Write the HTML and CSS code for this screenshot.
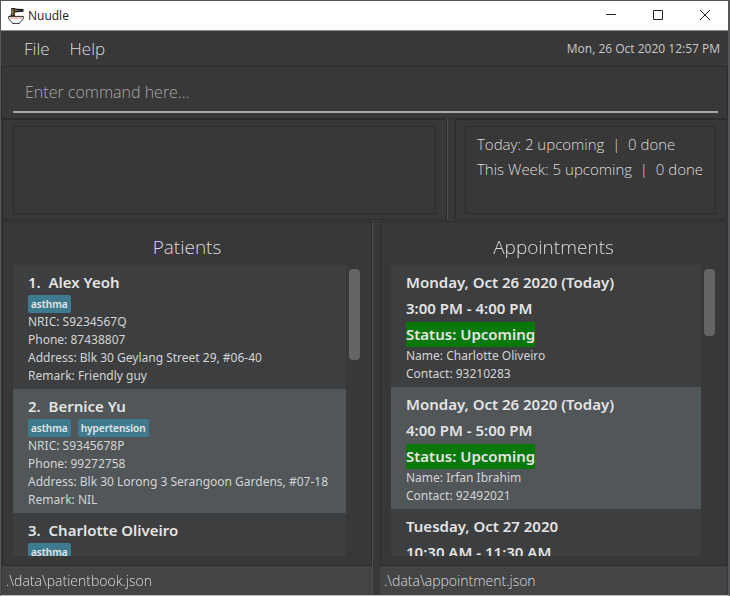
FILE: index.html
```html
<!DOCTYPE html>
<html lang="en">
<head>
<meta charset="utf-8">
<title>Nuudle</title>
<link rel="stylesheet" href="styles.css">
</head>
<body>
<div class="window">
  <header class="titlebar">
    <svg class="logo" viewBox="0 0 16 16" aria-hidden="true">
      <path d="M5 1.300 15.500 1.700M5 3.600 15.500 3" stroke="#1c1714" stroke-width="1.600" fill="none"/>
      <path d="M3.200 0h3.800v8H2.600V6.200h.8z" fill="#1c1714"/>
      <path d="M4.500 1v6.500M5.900 1v6" stroke="#e0b050" stroke-width=".6"/>
      <path d="M.6 8.400h14.800c0 2.900-1.300 4.500-3.100 5.500l-.9 1.500H4.600l-.9-1.500C1.900 12.900.6 11.300.6 8.400z" fill="#fff" stroke="#2c2c2c" stroke-width="1"/>
      <path d="M1.800 10h12.400" stroke="#f09a9e" stroke-width="1.200"/>
    </svg>
    <h1 class="app-name">Nuudle</h1>
    <button class="win-button" aria-label="Minimize"><svg viewBox="0 0 10 10"><path d="M0 4.500h10"/></svg></button>
    <button class="win-button" aria-label="Maximize"><svg viewBox="0 0 10 10"><path d="M.5.5h9v9h-9z"/></svg></button>
    <button class="win-button" aria-label="Close"><svg viewBox="0 0 10 10"><path d="M0 0l10 10M10 0L0 10"/></svg></button>
  </header>

  <nav class="menubar">
    <button class="menu">File</button>
    <button class="menu">Help</button>
    <time class="clock" datetime="2020-10-26T12:57">Mon, 26 Oct 2020 12:57 PM</time>
  </nav>

  <form class="command">
    <input class="command-input" type="text" aria-label="Command" placeholder="Enter command here...">
  </form>

  <div class="split summary">
    <section class="pane result-pane"><output class="box"></output></section>
    <div class="divider"></div>
    <section class="pane stats-pane">
      <div class="box stats">
        <p>Today: 2 upcoming &nbsp;|&nbsp; 0 done</p>
        <p>This Week: 5 upcoming &nbsp;|&nbsp; 0 done</p>
      </div>
    </section>
  </div>

  <main class="split lists">
    <section class="column patients">
      <div class="pane list-pane">
        <h2>Patients</h2>
        <div class="scroller">
          <ol class="list">
            <li class="card">
              <h3>1.&nbsp; Alex Yeoh</h3>
              <div class="tags"><span class="tag">asthma</span></div>
              <p>NRIC: S9234567Q</p>
              <p>Phone: 87438807</p>
              <p>Address: Blk 30 Geylang Street 29, #06-40</p>
              <p>Remark: Friendly guy</p>
            </li>
            <li class="card">
              <h3>2.&nbsp; Bernice Yu</h3>
              <div class="tags"><span class="tag">asthma</span><span class="tag">hypertension</span></div>
              <p>NRIC: S9345678P</p>
              <p>Phone: 99272758</p>
              <p>Address: Blk 30 Lorong 3 Serangoon Gardens, #07-18</p>
              <p>Remark: NIL</p>
            </li>
            <li class="card">
              <h3>3.&nbsp; Charlotte Oliveiro</h3>
              <div class="tags"><span class="tag">asthma</span></div>
            </li>
          </ol>
          <div class="track"><div class="thumb"></div></div>
        </div>
      </div>
      <footer class="status">.\data\patientbook.json</footer>
    </section>
    <div class="divider"></div>
    <section class="column appointments">
      <div class="pane list-pane">
        <h2>Appointments</h2>
        <div class="scroller">
          <ol class="list">
            <li class="card visit">
              <h3>Monday, Oct 26 2020 (Today)</h3>
              <h3>3:00 PM - 4:00 PM</h3>
              <h3 class="upcoming">Status: Upcoming</h3>
              <p>Name: Charlotte Oliveiro</p>
              <p>Contact: 93210283</p>
            </li>
            <li class="card visit">
              <h3>Monday, Oct 26 2020 (Today)</h3>
              <h3>4:00 PM - 5:00 PM</h3>
              <h3 class="upcoming">Status: Upcoming</h3>
              <p>Name: Irfan Ibrahim</p>
              <p>Contact: 92492021</p>
            </li>
            <li class="card visit">
              <h3>Tuesday, Oct 27 2020</h3>
              <h3>10:30 AM - 11:30 AM</h3>
            </li>
          </ol>
          <div class="track"><div class="thumb"></div></div>
        </div>
      </div>
      <footer class="status">.\data\appointment.json</footer>
    </section>
  </main>
</div>
</body>
</html>
```
FILE: styles.css
```css
* { box-sizing: border-box; }

body, h1, h2, h3, p, ol { margin: 0; padding: 0; }

body {
  background: #383838;
  color: #dcdcdc;
  font-family: "Open Sans", "Noto Sans", sans-serif;
  font-size: 12px;
}

button, input { font: inherit; color: inherit; border: 0; background: none; }

.window {
  display: flex;
  flex-direction: column;
  height: 100vh;
  border: 1px solid #55565a;
  border-right-width: 2px;
  border-bottom-color: #bcbcbc;
}

.titlebar {
  display: flex;
  flex: none;
  align-items: center;
  height: 30px;
  padding-left: 7px;
  background: #fff;
  color: #222;
  border-bottom: 1px solid #8c8c8c;
}

.logo { width: 16px; height: 16px; }

.app-name {
  flex: 1;
  padding-left: 4px;
  font-size: 12px;
  font-weight: 400;
}

.win-button { width: 47px; height: 29px; padding: 0; }

.win-button svg {
  width: 10px;
  height: 10px;
  overflow: visible;
  fill: none;
  stroke: #222;
}

.menubar {
  display: flex;
  flex: none;
  align-items: center;
  gap: 20px;
  height: 35px;
  padding: 0 8px 0 23px;
}

.menu { padding: 0; font-size: 17px; font-weight: 300; }

.clock { margin-left: auto; color: #c8c8c8; font-size: 12px; }

.command {
  flex: none;
  height: 53px;
  padding: 6px 9px 0 11px;
  border: 1px solid #2c2c2c;
}

.command-input {
  width: 100%;
  height: 40px;
  padding: 0 12px;
  border-bottom: 2px solid #a8a8a8;
  font-size: 16px;
  font-weight: 300;
  outline: none;
}

.command-input::placeholder { color: #a8a8a8; }

.split { display: flex; padding: 0 1px; }

.summary { flex: none; height: 102px; padding-bottom: 1px; }

.divider { width: 8px; border-left: 1px solid #4d4d4d; }

.pane { border: 1px solid #2c2c2c; }

.result-pane { flex: 423 1 0; padding: 6px 10px 5px; }

.stats-pane { flex: 251 1 0; padding: 6px 10px 5px 9px; }

.box {
  display: block;
  height: 100%;
  border: 1px solid #2c2c2c;
}

.stats {
  padding: 5px 11px;
  font-size: 15px;
  font-weight: 300;
  line-height: 25px;
  white-space: nowrap;
}

.lists { flex: 1; min-height: 0; }

.column {
  display: flex;
  flex-direction: column;
  min-width: 0;
  min-height: 0;
}

.patients { flex: 370 1 0; }

.appointments { flex: 347 1 0; }

.list-pane {
  display: flex;
  flex: 1;
  flex-direction: column;
  min-height: 0;
  padding: 8px 10px 9px;
}

h2 {
  height: 35px;
  font-size: 19px;
  font-weight: 300;
  line-height: 35px;
  text-align: center;
}

.scroller { display: flex; flex: 1; min-height: 0; }

.list {
  flex: 1;
  min-width: 0;
  overflow-y: auto;
  scrollbar-width: none;
  background: #3c3e3f;
  font-family: "Noto Sans", "Open Sans", sans-serif;
  list-style: none;
}

.track { width: 15px; padding: 4px 1px 0 3px; }

.thumb { height: 91px; border-radius: 4px; background: #646464; }

.appointments .thumb { height: 67px; }

.card {
  padding: 5px 0 4px 15px;
  color: #d4d4d4;
  line-height: 18px;
  white-space: nowrap;
}

.card:nth-child(even) { background: #515658; }

h3 {
  font-size: 15px;
  font-weight: 600;
  line-height: 25px;
  color: #e4e4e4;
}

.visit h3 + h3 { margin-top: 1px; }

.upcoming { width: fit-content; background: #087808; }

.tags { display: flex; gap: 7px; height: 18px; }

.tag {
  padding: 0 3px;
  border-radius: 2px;
  background: #3e7b91;
  color: #e8e8e8;
  font-size: 10px;
  font-weight: 600;
}

.status {
  flex: none;
  height: 29px;
  padding-left: 4px;
  background: #444;
  font-size: 14px;
  font-weight: 300;
  line-height: 29px;
}
```
